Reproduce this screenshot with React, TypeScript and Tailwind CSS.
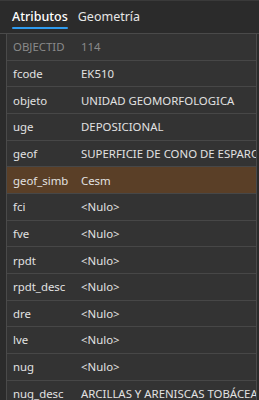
import React from 'react';

// Attribute rows shown in the pop-up table
const rows = [
  { key: 'OBJECTID', value: '114', readOnly: true },
  { key: 'fcode', value: 'EK510' },
  { key: 'objeto', value: 'UNIDAD GEOMORFOLOGICA' },
  { key: 'uge', value: 'DEPOSICIONAL' },
  { key: 'geof', value: 'SUPERFICIE DE CONO DE ESPARCIMIENTO' },
  { key: 'geof_simb', value: 'Cesm', selected: true },
  { key: 'fci', value: '<Nulo>' },
  { key: 'fve', value: '<Nulo>' },
  { key: 'rpdt', value: '<Nulo>' },
  { key: 'rpdt_desc', value: '<Nulo>' },
  { key: 'dre', value: '<Nulo>' },
  { key: 'lve', value: '<Nulo>' },
  { key: 'nug', value: '<Nulo>' },
  { key: 'nug_desc', value: 'ARCILLAS Y ARENISCAS TOBÁCEAS' },
];

const App: React.FC = () => {
  return (
    <div
      className="w-[259px] h-[400px] overflow-hidden bg-[#2b2b2b] text-[#e2e2e2] text-[11.4px]"
      style={{ fontFamily: '"Noto Sans", "Open Sans", sans-serif' }}
    >
      {/* Tabs */}
      <div className="h-[34px] border-t border-[#3a3a3a] border-b border-b-[#4a4a4a] flex items-start pl-[12px] gap-[10px]">
        <div className="pt-[7px] flex flex-col">
          <span className="text-[12.5px] leading-[18px] text-white font-medium">Atributos</span>
          <span className="mt-[1px] h-[2px] bg-[#2f9bef] rounded-full" />
        </div>
        <div className="pt-[7px]">
          <span className="text-[12.5px] leading-[18px] text-[#e6e6e6]">Geometría</span>
        </div>
      </div>

      {/* Attribute table */}
      <div className="ml-[6px] w-[251px] border-l border-r border-[#4a4a4a] flex flex-col">
        {rows.map((row) => (
          <div
            key={row.key}
            className={
              'h-[26.67px] shrink-0 flex items-center border-b border-[#474747] whitespace-nowrap overflow-hidden ' +
              (row.selected ? 'bg-[#5a3f27]' : 'bg-[#333333]')
            }
          >
            <span className={'w-[74px] shrink-0 pl-[6px] ' + (row.readOnly ? 'text-[#8a8a8a]' : '')}>
              {row.key}
            </span>
            <span className={row.readOnly ? 'text-[#8a8a8a]' : ''}>{row.value}</span>
          </div>
        ))}
      </div>
    </div>
  );
};

export default App;
